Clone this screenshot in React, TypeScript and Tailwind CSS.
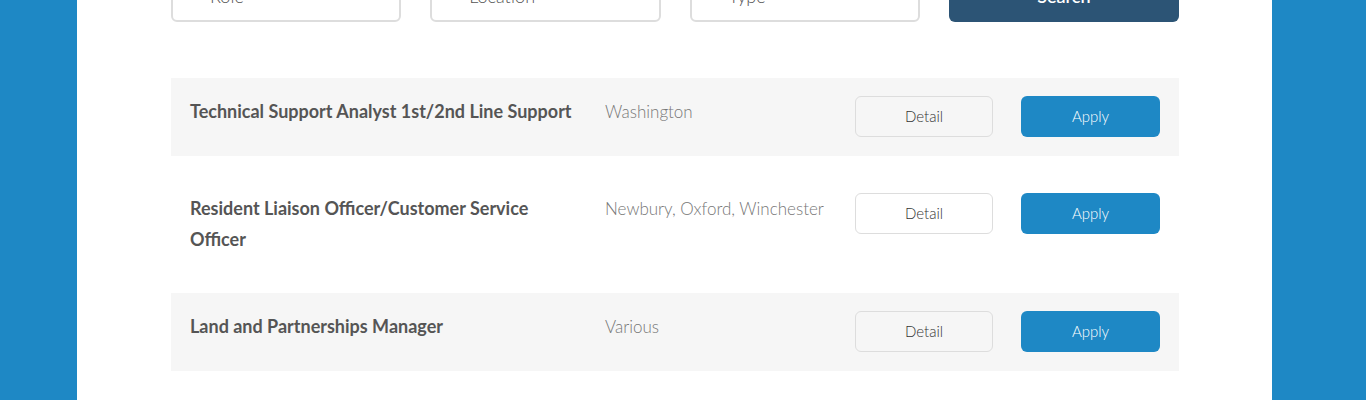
import { ChevronDown } from 'lucide-react';

const jobs = [
  { title: 'Technical Support Analyst 1st/2nd Line Support', location: 'Washington', shaded: true },
  { title: 'Resident Liaison Officer/Customer Service Officer', location: 'Newbury, Oxford, Winchester', shaded: false },
  { title: 'Land and Partnerships Manager', location: 'Various', shaded: true },
];

function FilterSelect({ label }: { label: string }) {
  return (
    <div className="flex h-[52px] items-center justify-between rounded-md border-2 border-[#dddddd] bg-white pl-[37px] pr-[18px]">
      <span className="text-[18px] font-light text-[#555555]">{label}</span>
      <ChevronDown className="h-4 w-4 text-[#2c5475]" strokeWidth={3.5} />
    </div>
  );
}

export default function App() {
  return (
    <div className="h-[400px] overflow-hidden bg-[#1e88c5] font-['Lato',sans-serif]">
      <div className="ml-[77px] flow-root h-full w-[1195px] bg-white">
        <div className="-mt-[30px] ml-[94px] w-[1008px]">
          {/* filter bar, scrolled partly out of view */}
          <div className="grid grid-cols-4 gap-[29px]">
            <FilterSelect label="Role" />
            <FilterSelect label="Location" />
            <FilterSelect label="Type" />
            <button className="h-[52px] rounded-md bg-[#2c5475] text-[18px] font-semibold text-white">Search</button>
          </div>

          <div className="mt-[56px] flex flex-col gap-[19px]">
            {jobs.map((job) => (
              <div
                key={job.title}
                className={`flex items-start px-[19px] pt-[18px] pb-[19px] ${job.shaded ? 'bg-[#f6f6f6]' : 'bg-white'}`}
              >
                <div className="w-[415px] pr-[25px] text-[18px] font-bold leading-[31px] text-[#555555]">{job.title}</div>
                <div className="w-[250px] text-[17px] font-light leading-[31px] text-[#777777]">{job.location}</div>
                <button className="h-[41px] w-[138px] rounded-md border border-[#dddddd] text-[15px] font-light text-[#333333]">
                  Detail
                </button>
                <button className="ml-[28px] h-[41px] w-[139px] rounded-md bg-[#1e88c5] text-[15px] font-light text-white">
                  Apply
                </button>
              </div>
            ))}
          </div>
        </div>
      </div>
    </div>
  );
}
